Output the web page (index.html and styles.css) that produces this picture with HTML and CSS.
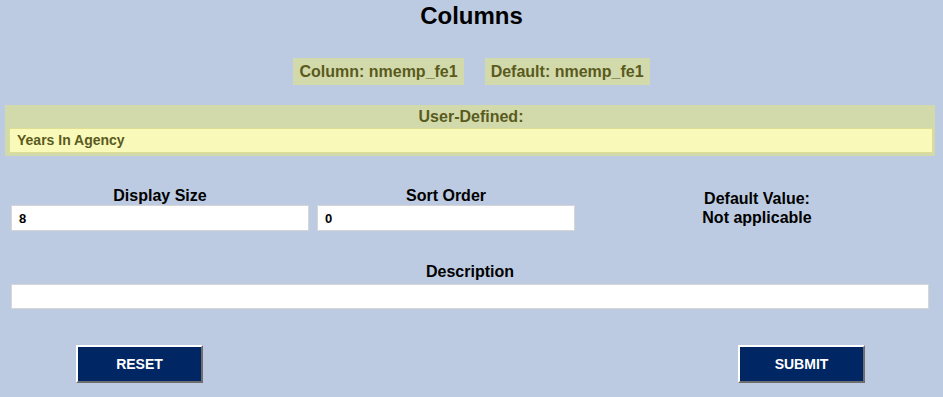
FILE: index.html
```html
<!DOCTYPE html>
<html lang="en">
<head>
    <meta charset="UTF-8">
    <meta name="viewport" content="width=device-width, initial-scale=1.0">
    <title>Columns</title>
    <link rel="stylesheet" href="styles.css">
</head>
<body>
    <h1 class="title">Columns</h1>

    <div class="chips">
        <span class="chip">Column: nmemp_fe1</span>
        <span class="chip">Default: nmemp_fe1</span>
    </div>

    <!-- User defined name -->
    <div class="panel">
        <div class="panel-head">User-Defined:</div>
        <div class="panel-body">Years In Agency</div>
    </div>

    <div class="fields">
        <div class="field field-size">
            <label for="display-size">Display Size</label>
            <input type="text" id="display-size" value="8">
        </div>
        <div class="field field-sort">
            <label for="sort-order">Sort Order</label>
            <input type="text" id="sort-order" value="0">
        </div>
        <div class="default-value">
            Default Value:<br>Not applicable
        </div>
    </div>

    <div class="field field-desc">
        <label for="description">Description</label>
        <input type="text" id="description" value="">
    </div>

    <div class="actions">
        <button class="btn btn-reset">RESET</button>
        <button class="btn btn-submit">SUBMIT</button>
    </div>
</body>
</html>
```

FILE: styles.css
```css
body {
    margin: 0;
    background-color: #bccbe1;
    font-family: "Liberation Sans", Arial, sans-serif;
    font-weight: bold;
    color: #000;
}
.title {
    margin: 0;
    padding-top: 3px;
    height: 26px;
    font-size: 24px;
    line-height: 25px;
    text-align: center;
}
.chips {
    display: flex;
    justify-content: center;
    gap: 21px;
    margin-top: 29px;
}
.chip {
    background-color: #d2daab;
    color: #5a5a1e;
    font-size: 16px;
    height: 27px;
    line-height: 27px;
    padding: 0 6px;
}
.panel {
    margin: 20px 8px 0 5px;
    background-color: #d2daab;
    padding: 0 2px 3px 4px;
}
.panel-head {
    height: 23px;
    line-height: 23px;
    text-align: center;
    color: #5a5a1e;
    font-size: 16px;
}
.panel-body {
    background-color: #f9f9ba;
    border: 1px solid #dedd92;
    height: 23px;
    line-height: 23px;
    padding-left: 7px;
    color: #5a5a1e;
    font-size: 14px;
}
.fields {
    display: flex;
    margin-top: 31px;
    padding-left: 11px;
    gap: 8px;
}
.field {
    display: flex;
    flex-direction: column;
}
.field label {
    font-size: 16px;
    text-align: center;
    height: 18px;
    line-height: 18px;
}
.field input {
    box-sizing: border-box;
    height: 26px;
    border: 1px solid #d6d6d6;
    background: #fff;
    font-family: "Liberation Sans", Arial, sans-serif;
    font-weight: bold;
    font-size: 13px;
    padding: 0 7px;
    outline: none;
}
.field-size {
    width: 298px;
}
.field-sort {
    width: 258px;
}
.default-value {
    flex: 1;
    text-align: center;
    font-size: 16px;
    line-height: 19px;
    padding-top: 2px;
    padding-right: 12px;
}
.field-desc {
    margin: 30px 14px 0 11px;
}
.field-desc label {
    height: 23px;
    line-height: 22px;
}
.field-desc input {
    height: 25px;
}
.actions {
    display: flex;
    justify-content: space-between;
    margin: 36px 78px 0 76px;
}
.btn {
    width: 127px;
    height: 38px;
    background-color: #002663;
    color: #fff;
    font-family: "Liberation Sans", Arial, sans-serif;
    font-weight: bold;
    font-size: 14px;
    border-style: solid;
    border-width: 2px;
    border-color: #fff #6e6e6e #6e6e6e #fff;
    cursor: pointer;
}
```
